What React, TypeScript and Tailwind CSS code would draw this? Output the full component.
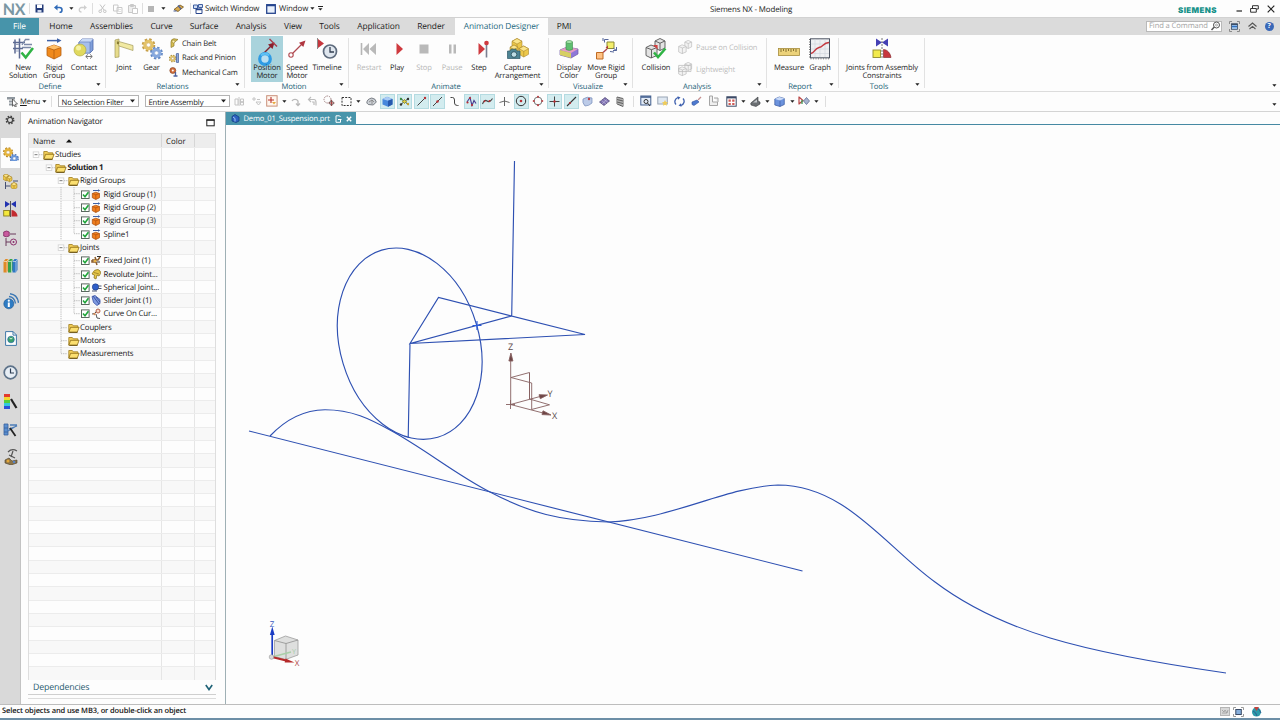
import type { ReactNode } from "react";

type Kids = { children?: ReactNode };

/* ---------- primitives ---------- */

function Svg({ w, h = w, vw = w, vh = h, children }: Kids & { w: number; h?: number; vw?: number; vh?: number }) {
  return (
    <svg width={w} height={h} viewBox={`0 0 ${vw} ${vh}`} fill="none" className="block shrink-0">
      {children}
    </svg>
  );
}

function Cell({ c, children }: Kids & { c: string }) {
  return <div className={`flex h-full shrink-0 items-center justify-center ${c}`}>{children}</div>;
}

function Caret() {
  return (
    <Svg w={5} h={3}>
      <path d="M0.3 0.3h4.2L2.4 2.7z" fill="#222" />
    </Svg>
  );
}

const Sep = () => <div className="h-[11px] w-px bg-[#dedede]" />;

/* ---------- ribbon icons (22 x 22) ---------- */

const NewSolutionIcon = () => (
  <Svg w={22}>
    <path d="M3 1.500v14M7.500 .5v20M1 4.500h12M1 10.500h10" stroke="#5c6a92" strokeWidth="1.500" />
    <path d="M17.500 1.500h-4L10 7M10 9.500h9M12 6.500h8" stroke="#7b89a8" strokeWidth="1.300" />
    <path d="M4 6.500h3M4 13h3" stroke="#9aa5c0" strokeWidth="1.200" />
    <path d="M9.500 14.500l4.200 5L21 10" stroke="#2fb344" strokeWidth="2.600" />
  </Svg>
);
const RigidGroupIcon = () => (
  <Svg w={22}>
    <path d="M4 2.600h11" stroke="#3e62a8" strokeWidth="1.500" />
    <path d="M14 .2l4.500 2.400-4.500 2.400z" fill="#3e62a8" />
    <path d="M4 9.500L11 7l7 2.500v8L11 21l-7-3.500z" fill="#f08a1c" stroke="#b45d10" strokeWidth=".8" />
    <path d="M4 9.500L11 7l7 2.500-7 2.500z" fill="#ffc069" />
    <path d="M11 12v9M4 9.500l7 2.500 7-2.500" stroke="#b45d10" strokeWidth=".8" />
  </Svg>
);
const ContactIcon = () => (
  <Svg w={22}>
    <path d="M6 4l3-3h11v11l-3 3H6z" fill="#7f9fda" stroke="#4b66a8" strokeWidth=".8" />
    <path d="M6 4l3-3h11l-3 3z" fill="#c8d9f6" />
    <path d="M6 4h11v11H6z" fill="#a6bfec" stroke="#5b77b6" strokeWidth=".6" />
    <circle cx="7" cy="12" r="6" fill="#e0d95e" stroke="#aaa23b" strokeWidth=".6" />
    <circle cx="5.500" cy="10" r="2.500" fill="#f6f2a6" />
    <path d="M13 18.500h6m-4-2.200l-2.300 2.200 2.300 2.200m2-4.400l2.300 2.200-2.300 2.200" stroke="#6a6a6a" strokeWidth=".9" />
  </Svg>
);
const JointIcon = () => (
  <Svg w={22}>
    <path d="M2 2l4-1v18l-4 .5z" fill="#e7dc8c" stroke="#a29a5a" strokeWidth=".7" />
    <path d="M4 3l16 4.500v5L6 8z" fill="#f1e9a2" stroke="#a29a5a" strokeWidth=".7" />
    <circle cx="5" cy="5" r="1.300" fill="#887c34" />
  </Svg>
);
function GearShape({ x, y, r, f, s }: { x: number; y: number; r: number; f: string; s: string }) {
  return (
    <g>
      <circle cx={x} cy={y} r={r} stroke={s} strokeWidth={r * 0.42} strokeDasharray={`${r * 0.44} ${r * 0.345}`} />
      <circle cx={x} cy={y} r={r * 0.66} stroke={f} strokeWidth={r * 0.55} />
      <circle cx={x} cy={y} r={r * 0.36} stroke={s} strokeWidth=".5" fill="#fff" />
    </g>
  );
}
const GearIcon = () => (
  <Svg w={22}>
    <GearShape x={7.5} y={7} r={5.6} f="#e3c268" s="#c69f48" />
    <GearShape x={15.5} y={15} r={5.3} f="#87a9de" s="#6288c4" />
  </Svg>
);
const PositionMotorIcon = () => (
  <Svg w={24} h={28}>
    <path d="M5 19L18 6" stroke="#7c2430" strokeWidth="1.500" />
    <path d="M19.500 4.500l-6.500 2 4.500 4.500z" fill="#8c1f2c" />
    <path d="M14.500 1l7.500 7.500" stroke="#a83c48" strokeWidth="1.400" />
    <circle cx="10" cy="21" r="5.300" stroke="#2f9be4" strokeWidth="3.200" fill="#b9dff2" />
    <path d="M6 17.500a5.300 5.300 0 0 1 8 0" stroke="#5ec0f4" strokeWidth="2.200" />
  </Svg>
);
const SpeedMotorIcon = () => (
  <Svg w={22}>
    <circle cx="5" cy="17" r="2.200" stroke="#b0484f" strokeWidth="1.100" />
    <path d="M6.500 15.500L17 5" stroke="#b0484f" strokeWidth="1.200" />
    <path d="M19.500 2.500l-6.500 2.200 4.300 4.300z" fill="#b0363f" />
  </Svg>
);
const TimelineIcon = () => (
  <Svg w={22}>
    <path d="M1.500 0v11" stroke="#8a8a8a" />
    <path d="M2 1l6 4.500L2 10z" fill="#c6373e" />
    <circle cx="14" cy="13.500" r="6.500" fill="#dfe6ee" stroke="#5e6b7d" strokeWidth="1.700" />
    <path d="M14 9v5h4" stroke="#333f52" strokeWidth="1.300" />
  </Svg>
);
const RestartIcon = () => (
  <Svg w={22}>
    <path d="M3.500 5v12" stroke="#b5b5b5" strokeWidth="1.600" />
    <path d="M11 5v12L5 11zM18 5v12l-6.500-6z" fill="#b9b9b9" />
  </Svg>
);
const PlayIcon = () => (
  <Svg w={22}>
    <path d="M10.500 5l6.500 6-6.500 6z" fill="#cf3a3f" />
  </Svg>
);
const StopIcon = () => (
  <Svg w={22}>
    <rect x="6.500" y="6.500" width="9" height="9" fill="#b9b9b9" />
  </Svg>
);
const PauseIcon = () => (
  <Svg w={22}>
    <path d="M8 6.500h2.500v9H8zM12.500 6.500H15v9h-2.500z" fill="#b9b9b9" />
  </Svg>
);
const StepIcon = () => (
  <Svg w={22}>
    <path d="M10.500 5l6.500 6-6.500 6z" fill="#cf3a3f" />
    <path d="M18.500 5v14.500" stroke="#7a7f92" strokeWidth="1.600" />
    <circle cx="18.500" cy="5" r="2.300" fill="#cf3a3f" />
  </Svg>
);
function MiniCube({ x, y, s, t = "#fbe58b", f = "#edc84a", k = "#a9872c" }: { x: number; y: number; s: number; t?: string; f?: string; k?: string }) {
  const q = s * 0.28;
  return (
    <g stroke={k} strokeWidth=".6">
      <path d={`M${x} ${y + q}l${s / 2} ${-q}l${s / 2} ${q}v${s * 0.6}l${-s / 2} ${q}l${-s / 2} ${-q}z`} fill={f} />
      <path d={`M${x} ${y + q}l${s / 2} ${-q}l${s / 2} ${q}l${-s / 2} ${q}z`} fill={t} />
      <path d={`M${x + s / 2} ${y + 2 * q}v${s * 0.6}`} />
    </g>
  );
}
const CaptureIcon = () => (
  <Svg w={22}>
    <MiniCube x={5} y={0.5} s={10} />
    <MiniCube x={12} y={8} s={9.5} />
    <MiniCube x={3} y={7} s={8} />
    <path d="M.5 13h2.500l1-1.800h5l1 1.800h3v7.500H.5z" fill="#4d8494" stroke="#2e5866" strokeWidth=".7" />
    <circle cx="7" cy="16.500" r="2.800" fill="#bfdde4" stroke="#234a56" strokeWidth=".8" />
  </Svg>
);
const DisplayColorIcon = () => (
  <Svg w={22}>
    <path d="M2 12l7-3 11 2v5l-7 4-11-3z" fill="#8e78d8" stroke="#6d5aa5" strokeWidth=".7" />
    <path d="M2 12l7-3 11 2-7 4z" fill="#e69cc4" />
    <path d="M2 12l11 3v5L2 17z" fill="#d6cf62" />
    <path d="M8 4v7.500q3 1.800 6.500 0V4z" fill="#5fbf70" stroke="#3c8c4c" strokeWidth=".6" />
    <ellipse cx="11.200" cy="4" rx="3.200" ry="1.500" fill="#a8e6ac" stroke="#3c8c4c" strokeWidth=".6" />
  </Svg>
);
const MoveRigidIcon = () => (
  <Svg w={22}>
    <path d="M1.500 14.500H8V21H1.500z" fill="#ffc183" stroke="#bf6b22" strokeWidth="1" />
    <path d="M12 4h7v6.500h-7z" fill="#f3ee6c" stroke="#8d8a34" strokeWidth="1" />
    <path d="M8 14.500l4-3.500" stroke="#b0484f" strokeWidth="1.400" />
    <path d="M13 10.500v-3l-2.500 2.500z" fill="#b0363f" />
    <path d="M9.500 4.500V1.500h4M8 3V0M18 12.500h3.500V9M21.500 12.500L18 10M15 13.500l4 .5" stroke="#55669a" />
  </Svg>
);
function WireCubes({ c, f }: { c: string; f: string }) {
  return (
    <g stroke={c} strokeWidth=".9" fill={f}>
      <path d="M10 3l5-2.500L20 3v7l-5 2.500L10 10z" />
      <path d="M10 3l5 2.200L20 3M15 5.200v7.300" />
      <path d="M1 9.500l5-2.500 6 2.500v8L6 20l-5-2.500z" />
      <path d="M1 9.500l5.500 2.200L12 9.500M6.500 11.700V20" />
    </g>
  );
}
const CollisionIcon = () => (
  <Svg w={22}>
    <WireCubes c="#555" f="#e3e3e3" />
    <path d="M9.500 7.500l2.500 2.500v-2.500z" stroke="#d24040" strokeWidth="1.200" />
    <path d="M9 14.500l4 4.500 7.500-8.500" stroke="#2fb344" strokeWidth="2.500" />
  </Svg>
);
const MeasureIcon = () => (
  <Svg w={22}>
    <rect x=".5" y="10.500" width="21" height="7" fill="#ecd27a" stroke="#a68c3d" strokeWidth=".8" />
    <path d="M3 11v3M5.500 11v2M8 11v3M10.500 11v2M13 11v3M15.500 11v2M18 11v3" stroke="#6f5c22" strokeWidth=".8" />
  </Svg>
);
const GraphIcon = () => (
  <Svg w={22}>
    <rect x="1.500" y=".8" width="19" height="19" fill="#eef0f3" stroke="#4b5361" strokeWidth="1" />
    <path d="M6 1v18M11 1v18M16 1v18M2 6h18M2 11h18M2 15.500h18" stroke="#cfd4db" strokeWidth=".6" />
    <path d="M2 15.500c4-1 3.500-5 8-6s4-4.500 10-5" stroke="#c4383f" strokeWidth="1.500" />
    <path d="M1.500 20.800h19M.5 1v19" stroke="#777" strokeDasharray="1 1.500" />
  </Svg>
);
const JointsAsmIcon = () => (
  <Svg w={22}>
    <path d="M5 .5l6 4-6 4zM17 .5l-6 4 6 4z" fill="#4440b4" />
    <path d="M11 0v21" stroke="#666" strokeWidth=".9" strokeDasharray="2 1" />
    <rect x="2" y="12" width="7.500" height="7.500" fill="#f2ea4c" stroke="#8f8a2d" strokeWidth=".9" />
    <path d="M12.500 11.500c4 0 7 4 7.500 8h-7.500z" fill="#c8363c" stroke="#7d2227" strokeWidth=".6" />
  </Svg>
);

/* ---------- ribbon structure ---------- */

function Big({ c, icon, lines, off, on }: { c: string; icon: ReactNode; lines: string[]; off?: boolean; on?: boolean }) {
  return (
    <div
      className={`flex h-[46px] shrink-0 flex-col items-center text-[7.600px] leading-[8.500px] tracking-[-.120px] ${c} ${off ? "text-[#b8b8b8]" : "text-[#1f1f1f]"} ${on ? "bg-[#a9d3dc]" : ""}`}
    >
      <div className="flex h-[27.500px] items-start overflow-visible pt-[2px]">{icon}</div>
      {lines.map((l) => (
        <span key={l} className="relative z-10 whitespace-nowrap">
          {l}
        </span>
      ))}
    </div>
  );
}

function Group({ c, label, pad, children }: Kids & { c: string; label: string; pad: string }) {
  return (
    <div className={`flex shrink-0 ${c}`}>
      <div className="flex min-w-0 flex-1 flex-col">
        <div className={`flex h-[47.500px] items-start pt-[1.500px] ${pad}`}>{children}</div>
        <div className="flex h-[8px] items-center pr-[4px]">
          <span className="flex-1 pl-[4px] pt-[2.500px] text-center text-[7.700px] leading-[8px] tracking-[-.100px] text-[#1f6379]">{label}</span>
          <div className="pb-[3px]">
            <Caret />
          </div>
        </div>
      </div>
      <div className="mt-[3px] h-[50px] w-px bg-[#e2e2e2]" />
    </div>
  );
}

function Small({ icon, text, off }: { icon: ReactNode; text: string; off?: boolean }) {
  return (
    <div className={`flex h-[14.600px] items-center gap-[3px] whitespace-nowrap text-[7.600px] leading-[10px] tracking-[-.170px] ${off ? "text-[#bdbdbd]" : "text-[#1f1f1f]"}`}>
      {icon}
      <span className="pt-px">{text}</span>
    </div>
  );
}

const BeltIcon = () => (
  <Svg w={10}>
    <path d="M2 9.500V4q0-3 3-3.300L9 1.500 5 4.500V8z" fill="#d8bf52" stroke="#8d7a2b" strokeWidth=".7" />
    <circle cx="4.500" cy="3.600" r="1.400" fill="#fff3b2" stroke="#8d7a2b" strokeWidth=".5" />
  </Svg>
);
const RackIcon = () => (
  <Svg w={10}>
    <GearShape x={3.7} y={5.5} r={3.2} f="#dfc168" s="#a98b35" />
    <path d="M7.500 .5h2v9h-2zM6.600 2h1M6.600 4h1M6.600 6h1M6.600 8h1" stroke="#536ca5" strokeWidth=".8" fill="#90a8d8" />
  </Svg>
);
const CamIcon = () => (
  <Svg w={10}>
    <circle cx="3.800" cy="3.500" r="3" fill="#d06b3a" stroke="#80401f" strokeWidth=".6" />
    <circle cx="3.800" cy="3.500" r="1" fill="#fff" />
    <path d="M6.500 5v4.500M4.500 9h4" stroke="#4c62a0" strokeWidth="1.300" />
  </Svg>
);

/* ---------- top bars ---------- */

function TitleBar() {
  return (
    <div className="flex h-[17px] shrink-0 items-center text-[7.900px] leading-[10px] tracking-[-.110px] text-[#1c1c1c]">
      <Cell c="w-[27px] pt-px">
        <span className="pl-px font-[Lato] text-[16px] font-bold leading-[17px] tracking-[-.300px] text-[#7a97a3]">NX</span>
      </Cell>
      <Cell c="w-[4px]"><Sep /></Cell>
      <Cell c="w-[17px]">
        <Svg w={9}>
          <path d="M.5 .5h8v8h-8z" fill="#233a78" />
          <path d="M2 .5h5v3.500H2z" fill="#fff" />
          <path d="M2.500 6h4v2.500h-4z" fill="#cfd8ec" />
        </Svg>
      </Cell>
      <Cell c="w-[20px]">
        <Svg w={9}>
          <path d="M2 3.500h3.500a2.200 2.200 0 0 1 0 5" stroke="#2f6ab8" strokeWidth="1.600" />
          <path d="M0 3.500L3.500 .5v6z" fill="#2f6ab8" />
        </Svg>
      </Cell>
      <Cell c="w-[6px]"><Caret /></Cell>
      <Cell c="w-[16px]">
        <Svg w={9}>
          <path d="M7 3.500H3.500a2.200 2.200 0 0 0 0 4.500" stroke="#cfcfcf" strokeWidth="1.300" />
          <path d="M9 3.500L6 1v5z" fill="#cfcfcf" />
        </Svg>
      </Cell>
      <Cell c="w-[5px]"><Sep /></Cell>
      <Cell c="w-[15px]">
        <Svg w={9}>
          <path d="M2 .5l4 5.500M7 .5L3 6" stroke="#c4c4c4" />
          <circle cx="2.200" cy="7.300" r="1.300" stroke="#c4c4c4" /><circle cx="6.800" cy="7.300" r="1.300" stroke="#c4c4c4" />
        </Svg>
      </Cell>
      <Cell c="w-[15px]">
        <Svg w={10}>
          <path d="M.5 1h4.500v6H.5zM4 3.500h5v6H4z" stroke="#c9c9c9" fill="#fff" />
          <path d="M5 5.500h3M5 7.500h3" stroke="#d5d5d5" strokeWidth=".7" />
        </Svg>
      </Cell>
      <Cell c="w-[15px]">
        <Svg w={10}>
          <path d="M.5 1.500h7v7h-7zM2.500 .5h3v2h-3z" stroke="#c9c9c9" fill="#eee" />
          <path d="M4.500 4.500h5v5h-5z" stroke="#c9c9c9" fill="#fff" />
        </Svg>
      </Cell>
      <Cell c="w-[5px]"><Sep /></Cell>
      <Cell c="w-[12px]"><div className="size-[6px] bg-[#b5b5b5]" /></Cell>
      <Cell c="w-[12px]"><Caret /></Cell>
      <Cell c="w-[19px]">
        <Svg w={11} h={9}>
          <path d="M1 5.500L7 1l3.500 2L5 7.500z" fill="#d9ab4f" stroke="#6e521d" strokeWidth=".8" />
          <path d="M.5 7h3M5 1.500L8 5" stroke="#4a5f9a" strokeWidth="1.200" />
        </Svg>
      </Cell>
      <Cell c="w-[4px]"><Sep /></Cell>
      <Cell c="w-[12px]">
        <Svg w={10}>
          <path d="M.5 1h4v3.500h-4zM5.500 .5h4v3h-4z" stroke="#3f5fa0" fill="#cfdcf3" />
          <path d="M3 5h6v4.500H3z" stroke="#28468c" fill="#fff" />
          <path d="M3 5.500h6" stroke="#28468c" strokeWidth="1.500" />
        </Svg>
      </Cell>
      <span className="w-[61px] whitespace-nowrap pl-px pt-[1.500px]">Switch Window</span>
      <Cell c="w-[11px]">
        <Svg w={10}>
          <rect x=".7" y=".7" width="8.600" height="8.600" stroke="#26458e" strokeWidth="1.300" fill="#e9f0fb" />
          <path d="M1 1.500h8" stroke="#26458e" strokeWidth="1.500" />
        </Svg>
      </Cell>
      <span className="w-[33px] pl-[3px] pt-[1.500px]">Window</span>
      <Cell c="w-[7px]"><Caret /></Cell>
      <Cell c="w-[8px]">
        <Svg w={5} h={5}><path d="M0 .5h5" stroke="#222" /><path d="M.3 2.200h4.200L2.400 4.600z" fill="#222" /></Svg>
      </Cell>
      <span className="ml-[386px] w-[90px] whitespace-nowrap pt-[2.500px]">Siemens NX - Modeling</span>
      <div className="flex-1" />
      <span className="mr-[17px] mt-[2px] font-[Inter] text-[7.900px] font-black tracking-[.420px] text-[#159189]">SIEMENS</span>
      <Cell c="w-[10px]"><Svg w={7}><path d="M.5 6h5.500" stroke="#333" strokeWidth="1.300" /></Svg></Cell>
      <Cell c="w-[20px]">
        <Svg w={9} h={8}><path d="M2.500 3V.7h5.800V4H6.500M.6 3.500h5.700v3.700H.6z" stroke="#333" /></Svg>
      </Cell>
      <Cell c="w-[13px]"><Svg w={8}><path d="M.7 .7l6.600 6.600M7.300 .7L.7 7.300" stroke="#222" strokeWidth="1.200" /></Svg></Cell>
      <div className="w-[3px]" />
    </div>
  );
}

const tabs: [string, string][] = [
  ["Home", "w-[44px]"],
  ["Assemblies", "w-[57px]"],
  ["Curve", "w-[43px]"],
  ["Surface", "w-[42px]"],
  ["Analysis", "w-[52px]"],
  ["View", "w-[32px]"],
  ["Tools", "w-[41px]"],
  ["Application", "w-[57px]"],
  ["Render", "w-[48px]"],
];

function TabBar() {
  return (
    <div className="flex h-[17.500px] shrink-0 items-center border-t border-[#d2d2d2] bg-[#dbdbdb] text-[8.400px] tracking-[-.100px] text-[#222]">
      <Cell c="w-[39px] bg-[#4794aa] text-white pt-[2px]">File</Cell>
      {tabs.map(([t, c]) => (
        <Cell key={t} c={`pt-[2px] ${c}`}>{t}</Cell>
      ))}
      <Cell c="w-[93px] bg-[#fdfdfd] text-[#1f6a80] whitespace-nowrap pt-[2px]">Animation Designer</Cell>
      <Cell c="w-[32px] pt-[2px]">PMI</Cell>
      <div className="flex-1" />
      <div className="flex h-[11.500px] w-[76px] items-center justify-between border border-[#b9b9b9] bg-white pl-[2px] text-[7.600px] text-[#a3a3a3]">
        <span className="whitespace-nowrap pt-[1.500px]">Find a Command</span>
        <Svg w={11} h={10}>
          <circle cx="6.500" cy="4" r="3" stroke="#555" /><circle cx="6.500" cy="4" r="1" stroke="#777" strokeWidth=".6" />
          <path d="M4.300 6L1.500 9" stroke="#555" strokeWidth="1.500" />
        </Svg>
      </div>
      <Cell c="w-[24px]">
        <Svg w={11}>
          <path d="M.5 3V.5H3M8 .5h2.500V3M10.500 8v2.500H8M3 10.500H.5V8" stroke="#8b8b8b" />
          <rect x="2.500" y="2.800" width="6" height="5.500" fill="#a9cbee" stroke="#3a4a63" strokeWidth=".8" />
          <path d="M2.500 3.300h6" stroke="#26364e" /><path d="M3 5.500h5" stroke="#2f6fc0" strokeWidth="1.500" />
        </Svg>
      </Cell>
      <Cell c="w-[12px]">
        <Svg w={9} h={8}><path d="M.5 4.500l4-3.500 4 3.500M1.500 7l3-2.600L7.500 7" stroke="#555" strokeWidth="1.100" /></Svg>
      </Cell>
      <Cell c="w-[22px]">
        <div className="flex size-[9px] items-center justify-center rounded-full bg-[#3a68b8] text-[7px] font-bold leading-none text-white">?</div>
      </Cell>
    </div>
  );
}

function Ribbon() {
  return (
    <div className="flex h-[57px] shrink-0 border-b border-[#dcdcdc]">
      <Group c="w-[106px]" label="Define" pad="pl-[7px]">
        <Big c="w-[32px]" icon={<NewSolutionIcon />} lines={["New", "Solution"]} />
        <Big c="w-[30px]" icon={<RigidGroupIcon />} lines={["Rigid", "Group"]} />
        <Big c="w-[30px]" icon={<ContactIcon />} lines={["Contact"]} />
      </Group>
      <Group c="w-[139px]" label="Relations" pad="pl-[4px]">
        <Big c="w-[28px]" icon={<JointIcon />} lines={["Joint"]} />
        <Big c="w-[27px]" icon={<GearIcon />} lines={["Gear"]} />
        <div className="flex flex-col pl-[4px]">
          <Small icon={<BeltIcon />} text="Chain Belt" />
          <Small icon={<RackIcon />} text="Rack and Pinion" />
          <Small icon={<CamIcon />} text="Mechanical Cam" />
        </div>
      </Group>
      <Group c="w-[104px]" label="Motion" pad="pl-[6px]">
        <Big c="w-[32px]" icon={<PositionMotorIcon />} lines={["Position", "Motor"]} on />
        <Big c="w-[28px]" icon={<SpeedMotorIcon />} lines={["Speed", "Motor"]} />
        <Big c="w-[32px]" icon={<TimelineIcon />} lines={["Timeline"]} />
      </Group>
      <Group c="w-[200px]" label="Animate" pad="pl-[6px]">
        <Big c="w-[28px]" icon={<RestartIcon />} lines={["Restart"]} off />
        <Big c="w-[28px]" icon={<PlayIcon />} lines={["Play"]} />
        <Big c="w-[26px]" icon={<StopIcon />} lines={["Stop"]} off />
        <Big c="w-[30px]" icon={<PauseIcon />} lines={["Pause"]} off />
        <Big c="w-[24px]" icon={<StepIcon />} lines={["Step"]} />
        <Big c="w-[53px]" icon={<CaptureIcon />} lines={["Capture", "Arrangement"]} />
      </Group>
      <Group c="w-[84px]" label="Visualize" pad="pl-[5px]">
        <Big c="w-[30px]" icon={<DisplayColorIcon />} lines={["Display", "Color"]} />
        <Big c="w-[44px]" icon={<MoveRigidIcon />} lines={["Move Rigid", "Group"]} />
      </Group>
      <Group c="w-[134px]" label="Analysis" pad="pl-[6px]">
        <Big c="w-[34px]" icon={<CollisionIcon />} lines={["Collision"]} />
        <div className="flex flex-col gap-[8px] pl-[5px] pt-[4px]">
          <Small off icon={<Svg w={15} h={15} vw={22} vh={22}><WireCubes c="#b5b5b5" f="#f3f3f3" /></Svg>} text="Pause on Collision" />
          <Small
            off
            icon={<Svg w={15} h={15} vw={22} vh={22}><WireCubes c="#b5b5b5" f="#f3f3f3" /><path d="M1 5h18v9H1z" stroke="#b5b5b5" /></Svg>}
            text="Lightweight"
          />
        </div>
      </Group>
      <Group c="w-[72px]" label="Report" pad="pl-[6px]">
        <Big c="w-[32px]" icon={<MeasureIcon />} lines={["Measure"]} />
        <Big c="w-[30px]" icon={<GraphIcon />} lines={["Graph"]} />
      </Group>
      <Group c="w-[86px]" label="Tools" pad="pl-[5px]">
        <Big c="w-[76px]" icon={<JointsAsmIcon />} lines={["Joints from Assembly", "Constraints"]} />
      </Group>
      <div className="flex-1" />
      <div className="flex items-end pb-[4px] pr-[3px]"><Caret /></div>
    </div>
  );
}

function Tog({ on, children }: Kids & { on?: boolean }) {
  return (
    <div className="flex h-full w-[16.650px] shrink-0 items-center justify-center">
      <div className={`flex h-[15px] w-[15px] items-center justify-center ${on ? "border border-[#b4dbe1] bg-[#d3ecef]" : ""}`}>{children}</div>
    </div>
  );
}

function Combo({ c, text }: { c: string; text: string }) {
  return (
    <div className={`flex h-[11.500px] shrink-0 items-center justify-between whitespace-nowrap border border-[#b4b4b4] bg-white pl-[2.500px] pr-[3px] ${c}`}>
      <span className="pt-[3px]">{text}</span>
      <Svg w={5} h={4}><path d="M0 .5h5L2.500 3.500z" fill="#222" /></Svg>
    </div>
  );
}

function SelectionBar() {
  return (
    <div className="flex h-[19px] shrink-0 items-center text-[7.700px] leading-[10px] tracking-[-.160px] text-[#1c1c1c]">
      <Cell c="w-[20px] pl-[4px]">
        <Svg w={11}>
          <path d="M0 1h8v2.500H0zM2 4.500h6v2H2zM2 7.500h4v2H2z" fill="#8f979e" />
          <path d="M5.500 3l5 5-2.200.2 1 2.300-1.200.5-1-2.300-1.600 1.500z" fill="#fff" stroke="#333" strokeWidth=".7" />
        </Svg>
      </Cell>
      <span className="w-[21px] pt-[2px]"><u>M</u>enu</span>
      <Cell c="w-[6px]"><Caret /></Cell>
      <Cell c="w-[8px]"><Sep /></Cell>
      <div className="w-[3px]" />
      <Combo c="w-[81px]" text="No Selection Filter" />
      <div className="w-[6px]" />
      <Combo c="w-[85px]" text="Entire Assembly" />
      <Cell c="w-[18px]">
        <Svg w={11}><path d="M1 3h3v6H1zM5 1v9M6.500 3h3v6h-3z" stroke="#c4c4c4" /><circle cx="8" cy="6" r="1" fill="#bbb" /></Svg>
      </Cell>
      <Cell c="w-[16px]">
        <Svg w={11}><path d="M1 3h4M3 1v4M5 6h5L7.500 9zM6 3.500h3" stroke="#c4c4c4" /></Svg>
      </Cell>
      <Cell c="w-[16px]">
        <Svg w={12}>
          <rect x=".7" y=".7" width="10.400" height="10.400" stroke="#c99079" strokeWidth="1" fill="#fff6ee" />
          <path d="M5 2v6M2 5h6" stroke="#b9332e" strokeWidth="1.100" /><path d="M6 7h4L8 9.500z" fill="#e8a93f" />
        </Svg>
      </Cell>
      <Cell c="w-[8px]"><Caret /></Cell>
      <Cell c="w-[17px]">
        <Svg w={11}><path d="M1 5a3.500 3.500 0 0 1 6 0v4M5 7.500l2 2 2-2" stroke="#b8b8b8" strokeWidth="1.300" /></Svg>
      </Cell>
      <Cell c="w-[15px]">
        <Svg w={11}><path d="M1 3.500h6q2 0 2 3v3M4 1L1.500 3.500 4 6M5 6h2v3" stroke="#bdbdbd" strokeWidth="1.200" /></Svg>
      </Cell>
      <Cell c="w-[18px]">
        <Svg w={12}>
          <circle cx="4.500" cy="4.500" r="3.500" stroke="#9a7a7a" strokeDasharray="1.500 1" />
          <path d="M8.500 5v6M5.500 8h6" stroke="#a94545" strokeWidth="1.200" /><circle cx="8.500" cy="8" r="2" stroke="#555" strokeWidth=".7" />
        </Svg>
      </Cell>
      <Cell c="w-[16px]">
        <Svg w={11}><rect x="1" y="1.500" width="9" height="8" stroke="#333" strokeDasharray="2 1.200" /></Svg>
      </Cell>
      <Cell c="w-[9px]"><Caret /></Cell>
      <Tog><Svg w={11}><path d="M.8 7q0-4 5-5 4 .5 4.500 4l-3 3-5-.5z" fill="#ccd0d5" stroke="#60656d" strokeWidth=".8" /><path d="M3 6l3-2 2 2M6 4v4" stroke="#777" strokeWidth=".7" /></Svg></Tog>
      <Tog on>
        <Svg w={11}><path d="M.5 3L5 .7 10.500 3v5.500L6 10.800.5 8.500z" fill="#4788dc" /><path d="M.5 3L5 .7 10.500 3 6 4.700z" fill="#a9cbf5" /><path d="M6 4.700v6L10.500 8.500V3z" fill="#2659ae" /></Svg>
      </Tog>
      <Tog on>
        <Svg w={11}><path d="M1 2l9 7M1 9l9-7" stroke="#384832" strokeWidth="1" /><path d="M5.500 3v5M3 5.500h5" stroke="#a8b03c" /><circle cx="2" cy="3" r="1.200" fill="#3c8f46" /><circle cx="9" cy="8" r="1.200" fill="#c9a02a" /><circle cx="5.500" cy="5.500" r="1.300" fill="#e2cc46" /><circle cx="2" cy="8.500" r="1.200" fill="#333" /><circle cx="9" cy="3" r="1.200" fill="#333" /></Svg>
      </Tog>
      <Tog on><Svg w={11}><path d="M1.500 9.500l7-7" stroke="#444" /><circle cx="9" cy="2" r="1.200" fill="#b92f35" /></Svg></Tog>
      <Tog on><Svg w={11}><path d="M1 10l9-9" stroke="#444" /><circle cx="5.500" cy="5.500" r="1.200" fill="#b92f35" /></Svg></Tog>
      <Tog><Svg w={11}><path d="M1.500 1.500h2q2 0 2 2.500v3q0 2.500 3 2.500h1" stroke="#444" /></Svg></Tog>
      <Tog on><Svg w={11}><path d="M1 6L4 1.500 6 9.500l2-5 2 3" stroke="#473a8f" strokeWidth="1.100" /><circle cx="4" cy="2" r="1.100" fill="#b92f35" /><circle cx="6" cy="9" r="1.100" fill="#b92f35" /><circle cx="1.500" cy="6.500" r="1.100" fill="#b92f35" /></Svg></Tog>
      <Tog on><Svg w={11}><path d="M.5 8q2-5 4.500-3t5.500-2.500" stroke="#444" strokeWidth="1.100" /><circle cx="2.500" cy="5.300" r="1" fill="#b92f35" /><circle cx="7.500" cy="5" r="1" fill="#b92f35" /></Svg></Tog>
      <Tog><Svg w={11}><path d="M5.500 1v9M.5 6.500q5-3 10 0" stroke="#666" /></Svg></Tog>
      <Tog on><Svg w={12}><circle cx="6" cy="6" r="4.700" stroke="#333" /><circle cx="6" cy="6" r="1.300" fill="#b92f35" /></Svg></Tog>
      <Tog><Svg w={12}><circle cx="6" cy="6" r="3.900" stroke="#555" strokeWidth=".8" /><g fill="#b9464a"><circle cx="6" cy="1.800" r="1.100" /><circle cx="6" cy="10.200" r="1.100" /><circle cx="1.800" cy="6" r="1.100" /><circle cx="10.200" cy="6" r="1.100" /></g></Svg></Tog>
      <Tog on><Svg w={11}><path d="M5.500 .5v10M.5 5.500h10" stroke="#444" /><circle cx="5.500" cy="5.500" r="1.200" fill="#b92f35" /></Svg></Tog>
      <Tog on><Svg w={11}><path d="M1 10l9-9" stroke="#333" strokeWidth="1.100" /><circle cx="4" cy="7" r="1.100" fill="#b92f35" /></Svg></Tog>
      <Tog><Svg w={11}><path d="M1 3q4-3 9-1v5q-3 3-7 3-3-3-2-7z" fill="#bccbe8" stroke="#7389b8" strokeWidth=".7" /><circle cx="7" cy="3" r="1.200" fill="#b9464a" /></Svg></Tog>
      <Tog><Svg w={11}><path d="M.5 6L6 1.500 10.500 5 5 9.500z" fill="#7d6fb0" stroke="#47406e" strokeWidth=".7" /><path d="M2.500 4.500L7 8M4.500 3l4.500 3.500M3 8l5-4.500" stroke="#d8d2ee" strokeWidth=".5" /></Svg></Tog>
      <Tog><Svg w={11}><path d="M2 1l6 1.500v8L2 8zM4 1.500v7.500M6 2v8M2 3.500l6 1.500M2 6l6 1.500" stroke="#555" strokeWidth=".9" /></Svg></Tog>
      <Cell c="w-[9px]"><Sep /></Cell>
      <Cell c="w-[16px]"><Svg w={12}><rect x=".8" y="1" width="10" height="9" stroke="#44618f" fill="#e3ecf8" /><path d="M1 2h10" stroke="#44618f" strokeWidth="1.600" /><circle cx="6" cy="6.500" r="2" stroke="#333" /><path d="M7.500 8l2.500 3" stroke="#333" /></Svg></Cell>
      <Cell c="w-[17px]"><Svg w={12}><rect x=".8" y="2" width="9.500" height="7" stroke="#9aa6b5" fill="#dfe8f2" /><path d="M8 5l1 2 2 .3-1.500 1.500.4 2L8 9.800l-2 1 .4-2L5 7.300 7 7z" fill="#f0cc58" /></Svg></Cell>
      <Cell c="w-[17px]"><Svg w={11}><path d="M2 8.500a4.300 4.300 0 0 1 2-7M9 2.500a4.300 4.300 0 0 1-2 7" stroke="#3d5fae" strokeWidth="1.300" /><path d="M3.500 .3l3 1.200L4 3.700zM7.500 10.700l-3-1.200L7 7.300z" fill="#3d5fae" /></Svg></Cell>
      <Cell c="w-[17px]"><Svg w={11}><path d="M1 6l5-2 2 2-5 3.500-2-1z" fill="#4d79cf" stroke="#31529c" strokeWidth=".6" /><path d="M7 4l3-3" stroke="#c58f8f" strokeWidth="1.200" /></Svg></Cell>
      <Cell c="w-[17px]"><Svg w={12}><path d="M1.500 1h3v6h5v3.500h-8z M6 3h4v4" stroke="#a5a5a5" fill="#efefef" /></Svg></Cell>
      <Cell c="w-[18px]"><Svg w={11}><rect x=".8" y=".8" width="9.400" height="9.400" stroke="#3c4a66" fill="#fff" /><path d="M1 1.600h9" stroke="#3c4a66" strokeWidth="1.600" /><path d="M2.500 3.500h2.300v2.300H2.500zM6.200 3.500h2.300v2.300H6.200zM2.500 7h2.300v2H2.500zM6.200 7h2.300v2H6.200z" fill="#cf5a55" /></Svg></Cell>
      <Cell c="w-[6px]"><Caret /></Cell>
      <Cell c="w-[18px]"><Svg w={11}><path d="M.8 7L8 1v4l2 1v2L6 10.500 1 9z" fill="#6b6f73" stroke="#3b3e42" strokeWidth=".6" /><path d="M3 6.500l4-3v3z" fill="#c2c6ca" /></Svg></Cell>
      <Cell c="w-[6px]"><Caret /></Cell>
      <Cell c="w-[19px]"><Svg w={11}><path d="M.8 3l4.500-2 5 1.500v6L6 10.500.8 9z" fill="#6c93dd" stroke="#35569e" strokeWidth=".7" /><path d="M.8 3l4.500-2 5 1.500L6 4.500z" fill="#cadbf8" /><path d="M6 4.500v6" stroke="#35569e" strokeWidth=".6" /></Svg></Cell>
      <Cell c="w-[6px]"><Caret /></Cell>
      <Cell c="w-[18px]"><Svg w={12}><path d="M1 1.500v8M1 2l4 3.500L1 9" stroke="#b94646" strokeWidth="1.200" /><path d="M4 9V5" stroke="#3b9a55" strokeWidth="1.300" /><path d="M8.500 2.500L11.500 6l-3 3.500-3-3.500z" fill="#a7b4d0" stroke="#4e5f86" strokeWidth=".7" /></Svg></Cell>
      <Cell c="w-[6px]"><Caret /></Cell>
      <Cell c="w-[13px]"><Sep /></Cell>
      <div className="flex-1" />
      <div className="mt-[6px] pr-[3px]"><Caret /></div>
    </div>
  );
}

/* ---------- resource bar ---------- */

function SideBar() {
  return (
    <div className="flex w-[21px] shrink-0 flex-col border-r border-[#c3c3c3] bg-[#d9d9d9] pl-px">
      <div className="flex h-[26px] justify-center pr-[2px] pt-[3px]">
        <Svg w={10}>
          <circle cx="5" cy="5" r="3.600" stroke="#444" strokeWidth="1.700" strokeDasharray="1.500 1.330" />
          <circle cx="5" cy="5" r="2.600" stroke="#444" strokeWidth="1.200" />
        </Svg>
      </div>
      <div className="flex h-[30px] items-center justify-center bg-[#fdfdfd]">
        <Svg w={16} vw={22}>
          <GearShape x={7} y={7} r={5.8} f="#e5b43c" s="#b8892a" />
          <GearShape x={15.5} y={15.5} r={5.2} f="#6c98da" s="#3f68ae" />
        </Svg>
      </div>
      <div className="flex h-[27px] items-center justify-center">
        <Svg w={15}>
          <MiniCube x={0} y={0} s={6} /><MiniCube x={4} y={2} s={5} />
          <MiniCube x={8} y={8.5} s={6} /><path d="M2.500 8v7M2.500 12h5M10 7h5" stroke="#444f72" />
        </Svg>
      </div>
      <div className="flex h-[28px] items-center justify-center">
        <Svg w={15} h={16}>
          <path d="M2 0l5 3-5 3.500zM13 0L8 3l5 3.500z" fill="#2333b0" /><path d="M7.500 0v16" stroke="#333" strokeWidth=".8" />
          <rect x=".7" y="9.500" width="5.800" height="5.500" fill="#f4e83c" stroke="#8a7d1f" strokeWidth=".9" />
          <path d="M8.500 9c3 0 6 3 6 6.500h-6z" fill="#c22b30" />
        </Svg>
      </div>
      <div className="flex h-[29px] items-center justify-center">
        <Svg w={15} h={16}>
          <path d="M.7 2q3-2 5.500 0v4q-3 1.500-5.500 0z" fill="#c95a9e" stroke="#7c2b60" strokeWidth=".8" />
          <path d="M7 4h6M3 8v8M3 12h4" stroke="#6a3a5c" /><circle cx="10.500" cy="12" r="3" stroke="#8b2f6c" /><circle cx="10.500" cy="12" r="1" fill="#8b2f6c" />
        </Svg>
      </div>
      <div className="flex h-[27px] items-center justify-center">
        <Svg w={15} h={15}>
          <path d="M.5 3.500L2.500 1h3v11L4 14.500H.5z" fill="#e08a26" /><path d="M5 3.500L7 1h3v11l-1.500 2.500H5z" fill="#38a349" /><path d="M9.500 3.500l2-2.500h3v11L13 14.500H9.500z" fill="#2f78c4" />
          <path d="M4 3.500v11M8.500 3.500v11M13 3.500v11M.5 3.500H4L5.500 1M5 3.500h3.500L10 1M9.500 3.500H13L14.500 1" stroke="#f3f3f3" strokeWidth=".6" />
        </Svg>
      </div>
      <div className="flex h-[44px] items-center justify-center">
        <Svg w={16} h={17}>
          <circle cx="5.800" cy="10.800" r="5" fill="#2e7cc4" stroke="#1c548c" strokeWidth=".6" />
          <path d="M5.800 9.500v4.500" stroke="#fff" strokeWidth="2" /><circle cx="5.800" cy="7.700" r="1.100" fill="#fff" />
          <path d="M6 3.500q5.500.5 6.500 7M7 .8q7.500 1 8.500 9" stroke="#3c78b4" strokeWidth="1.400" />
        </Svg>
      </div>
      <div className="flex h-[30px] items-center justify-center">
        <Svg w={12} h={15}>
          <path d="M.6 .6h7.500l3.300 3.300v10.500H.6z" fill="#fdfdfd" stroke="#4078a8" />
          <path d="M8 .6v3.500h3.300" stroke="#4078a8" /><circle cx="6" cy="8.500" r="3.300" fill="#39a06a" stroke="#2d6fa4" strokeWidth=".7" />
          <path d="M4.500 7l1.500 1 1.500-1" stroke="#d7f2dd" />
        </Svg>
      </div>
      <div className="flex h-[38px] items-center justify-center">
        <Svg w={15}>
          <circle cx="7.500" cy="7.500" r="6.300" fill="#e7eef5" stroke="#5e738a" strokeWidth="1.700" />
          <path d="M7.500 3.500v4.500H11" stroke="#2c3c52" strokeWidth="1.200" />
        </Svg>
      </div>
      <div className="flex h-[21px] items-center justify-center">
        <Svg w={14} h={15}>
          <path d="M0 0h6v3H0z" fill="#e23b2e" /><path d="M0 3h6v3H0z" fill="#f3d832" /><path d="M0 6h6v3H0z" fill="#55cf3c" /><path d="M0 9h6v3H0z" fill="#33c9dc" /><path d="M0 12h6v3H0z" fill="#2b50d8" />
          <path d="M7 5l5.500 9" stroke="#222" strokeWidth="2.200" />
        </Svg>
      </div>
      <div className="flex h-[35px] items-center justify-center">
        <Svg w={15} h={14}>
          <path d="M1 1h4v11H1zM1 5h4M1 9h4" fill="#5a8fd0" stroke="#38619c" strokeWidth=".8" />
          <path d="M6 6l8-3M5 8l9-5.500M7 2h7" stroke="#4d7db8" strokeWidth="1.300" /><path d="M7 5l5.500 8" stroke="#222" strokeWidth="1.800" />
        </Svg>
      </div>
      <div className="flex h-[20px] items-center justify-center">
        <Svg w={14} h={16}>
          <path d="M4 3q4-4 9-1M9 2l-2 6M5 6l6 3" stroke="#555" strokeWidth="1.200" />
          <path d="M1 11l4-2 3 3 5-1v3l-6 2-6-2z" fill="#8c7448" stroke="#4a3d25" strokeWidth=".6" /><circle cx="4" cy="12" r="1.500" fill="#e3a73a" />
          <circle cx="10" cy="13" r="1.300" fill="#5582c4" />
        </Svg>
      </div>
    </div>
  );
}

/* ---------- navigator ---------- */

const FolderIcon = () => (
  <Svg w={12} h={13}>
    <path d="M.8 11V3.500h3.500l1 1.300h4.500V7" fill="#f3cf58" stroke="#9c7a1d" strokeWidth=".8" />
    <path d="M.8 11.300l1.800-5h8.500l-1.900 5z" fill="#fbdf70" stroke="#8a6a14" strokeWidth=".8" />
    <path d="M1.500 11.300h8" stroke="#5f480d" strokeWidth=".9" />
  </Svg>
);
const CheckIcon = () => (
  <Svg w={11} h={13}>
    <rect x="1.500" y="2.900" width="7.600" height="7.600" fill="#fff" stroke="#4a5a50" strokeWidth=".9" />
    <path d="M3 6.500l2 2.300 3.400-4.600" stroke="#1fa53a" strokeWidth="1.600" />
  </Svg>
);
const bodyIcons: Record<string, ReactNode> = {
  rigid: <><path d="M2 2.500h6" stroke="#3e62a8" strokeWidth="1" /><path d="M7 1.200l2.300 1.300L7 3.800z" fill="#3e62a8" /><path d="M1.300 5.500l3.500-1.300 3.700 1.300v4.200l-3.700 1.800-3.500-1.800z" fill="#ef7d1d" stroke="#a64a0c" strokeWidth=".7" /><path d="M1.300 5.500l3.500 1.300 3.700-1.300M4.800 6.800v4.700" stroke="#a64a0c" strokeWidth=".6" /></>,
  fixed: <><path d="M1 6h6l2-3M1 6v2h4l1 3M5 6L4 3" stroke="#8a5a28" strokeWidth="1.500" /><path d="M6 2.500h4M6 8h3" stroke="#333" /><circle cx="4" cy="7" r="1.300" fill="#e5b143" /></>,
  revolute: <><path d="M1 6q2-5 6-4.500 3 1 2.500 4L8 8 6 7l-1 4-2-1 .5-3z" fill="#e6c648" stroke="#8f7620" strokeWidth=".8" /><path d="M3 4.500l5 1.500" stroke="#8f7620" strokeWidth=".7" /></>,
  spherical: <><circle cx="4.500" cy="6" r="3.200" fill="#2f5fc8" stroke="#1b3b85" strokeWidth=".6" /><path d="M7 5h3.500M7 7.500h3.500M1 10h5" stroke="#4a5570" /></>,
  slider: <><path d="M1 2.500l3-1 5 4v4l-3 2-3.500-3z" fill="#7f9ae0" stroke="#3a52a4" strokeWidth=".8" /><path d="M2 2l6 8M5 3l4 5" stroke="#2c4292" strokeWidth=".8" /></>,
  curve: <><path d="M1 7q3 0 4-2t3-2.500M5 7l1 4 3 .5" stroke="#555" /><circle cx="7" cy="4" r="2" stroke="#b5604a" fill="#f7d9c7" /><circle cx="3.500" cy="7" r="1.200" fill="#d08a5a" /></>,
};

/* One indent column of the tree: v = line, t = tee, l = corner, m = expander. */
function Guide({ k }: { k: string }) {
  return (
    <Svg w={12.5} h={13.33}>
      <g stroke="#b5b5b5" strokeWidth=".9" strokeDasharray="1.300 .9">
        {k === "v" && <path d="M6 0v13.300" />}
        {k === "t" && <path d="M6 0v13.300M6 6.700h6" />}
        {k === "l" && <path d="M6 0v6.700h6" />}
        {k === "m" && <path d="M9 6.700h3.500" />}
      </g>
      {k === "m" && (
        <>
          <rect x="3.200" y="3.900" width="5.600" height="5.600" fill="#fff" stroke="#d0d0d0" strokeWidth=".8" />
          <path d="M4.500 6.700h3" stroke="#666" strokeWidth=".9" />
        </>
      )}
    </Svg>
  );
}

type Row = { g: string; text: string; icon?: string; bold?: boolean };
const rows: Row[] = [
  { g: "m", text: "Studies" },
  { g: " m", text: "Solution 1", bold: true },
  { g: "  m", text: "Rigid Groups" },
  { g: "  vt", text: "Rigid Group (1)", icon: "rigid" },
  { g: "  vt", text: "Rigid Group (2)", icon: "rigid" },
  { g: "  vt", text: "Rigid Group (3)", icon: "rigid" },
  { g: "  vl", text: "Spline1", icon: "rigid" },
  { g: "  m", text: "Joints" },
  { g: "  vt", text: "Fixed Joint (1)", icon: "fixed" },
  { g: "  vt", text: "Revolute Joint...", icon: "revolute" },
  { g: "  vt", text: "Spherical Joint...", icon: "spherical" },
  { g: "  vt", text: "Slider Joint (1)", icon: "slider" },
  { g: "  vl", text: "Curve On Cur...", icon: "curve" },
  { g: "  t", text: "Couplers" },
  { g: "  t", text: "Motors" },
  { g: "  l", text: "Measurements" },
];
const allRows: (Row | null)[] = [...rows, ...Array.from({ length: 24 }, () => null)];

function Navigator() {
  return (
    <div className="flex w-[205px] shrink-0 flex-col border-r-[1.500px] border-[#9fb0b5] pl-[7px] pr-[9px] text-[7.900px] tracking-[-.160px] text-[#222]">
      <div className="flex h-[21px] items-center justify-between pr-px text-[8.200px] tracking-[-.200px]">
        <span>Animation Navigator</span>
        <Svg w={9} h={8}><rect x=".8" y=".8" width="7.400" height="6" stroke="#222" /><path d="M.5 1.200h8" stroke="#222" strokeWidth="1.200" /></Svg>
      </div>
      <div className="flex h-[14px] items-center border border-b-0 border-[#dedede] bg-[#ededed] leading-[10px] tracking-[0px]">
        <div className="flex h-full w-[133px] items-center gap-[11px] border-r border-[#d6d6d6] pl-[4px]">
          <span className="pt-[2px]">Name</span>
          <Svg w={6} h={4}><path d="M0 3.500h6L3 .3z" fill="#111" /></Svg>
        </div>
        <div className="flex h-full w-[33px] items-center border-r border-[#d6d6d6] pl-[4px] pt-[2px]">Color</div>
      </div>
      <div className="flex h-[533px] flex-col border-x border-b border-[#dedede] leading-[10px]">
        {allRows.map((r, i) => (
          <div key={i} className={`flex h-[13.325px] shrink-0 border-t border-[#ececec] ${i % 2 ? "bg-[#f8f8f8]" : "bg-[#fdfdfd]"}`}>
            <div className="flex h-[12.400px] w-[133px] shrink-0 items-center border-r border-[#e6e6e6] pl-px">
              {r && (
                <>
                  {r.g.split("").map((k, j) => (
                    <Guide key={j} k={k} />
                  ))}
                  {r.icon ? (
                    <>
                      <CheckIcon />
                      <Svg w={12} h={13}>{bodyIcons[r.icon]}</Svg>
                    </>
                  ) : (
                    <FolderIcon />
                  )}
                  <span className={`whitespace-nowrap pl-[.5px] pt-px ${r.bold ? "font-bold tracking-[-.360px]" : ""}`}>{r.text}</span>
                </>
              )}
            </div>
            <div className="h-full w-[33px] shrink-0 border-r border-[#e6e6e6]" />
          </div>
        ))}
      </div>
      <div className="flex h-[15px] items-center justify-between border-b border-[#cfcfcf] pl-[5px] pr-[3px] text-[8.800px] text-[#1f5a6e]">
        <span className="pt-px">Dependencies</span>
        <Svg w={8} h={7}><path d="M.8 1l3.200 4.500L7.200 1" stroke="#1f6277" strokeWidth="1.600" /></Svg>
      </div>
      <div className="mt-[3px] h-px bg-[#dcdcdc]" />
    </div>
  );
}

/* ---------- graphics window ---------- */

function Viewport() {
  return (
    <svg viewBox="226 125 1054 579" width="1054" height="579" fill="none" className="block font-['Open_Sans',sans-serif]">
      <g stroke="#2e50b2" strokeWidth="1.150">
        <ellipse cx="409.700" cy="343.700" rx="69.500" ry="97.700" transform="rotate(-16.7 409.700 343.700)" />
        <path d="M514.500 161L511.700 316L410 343.500L438.500 297.500L585 334.500L410 343.500L408.200 438" />
        <path d="M472.500 325.500h9M477 321v9" stroke="#2b5bdc" />
        <path d="M249 431L802.500 571" />
        <path d="M270 436C286 419 304 410 325 409.700C352 409.700 370 419 390 430C425 449 455 474 490 492C530 513 560 521 608 522C670 520 725 487 778 485C845 485 885 546 935 582C1000 631 1080 652 1226 673" />
      </g>
      <g stroke="#866060" strokeWidth=".9">
        <path d="M510.700 404V360M510.500 404.500L545 413.500M510.500 404.500L540 396.500M506 404.500h9M510.500 400v9" />
        <path d="M511 377.500l18.500-5v26.500M511 377.500l20.700 5.500v26.500M529.500 399l20 5.800-18 4.700M529.500 399v-26" />
        <path d="M510.900 353l-2 8h4zM551 415l-8-4.200-1 3.800zM547.500 395l-8.500-.3 1.300 4z" fill="#6d4444" />
      </g>
      <g fill="#5a4a4a" fontSize="9">
        <text x="508" y="350">Z</text>
        <text x="547.500" y="397">Y</text>
        <text x="552" y="418.500">X</text>
      </g>
      <path d="M274.500 640.500l11-4.500 12.500 4v15l-12.500 4.500-11-3z" fill="#dedfde" stroke="#9d9d9d" strokeWidth=".8" />
      <path d="M274.500 640.500l11.500 3 12-3.500M286 643.500v15.500" stroke="#8f8f8f" strokeWidth=".8" />
      <path d="M272 657l19-5" stroke="#a8cfa8" strokeWidth="1.500" />
      <text x="292" y="654" fontSize="7" fill="#a9cbaa">Y</text>
      <path d="M272.200 657V634" stroke="#1b3cc4" strokeWidth="1.700" />
      <path d="M272.300 626.500l-2.400 8.500h4.800z" fill="#1b3cc4" />
      <path d="M272 657l15 3.800" stroke="#b52a2a" strokeWidth="2" />
      <path d="M294.500 662.500l-9-4-.8 4z" fill="#b52a2a" />
      <circle cx="271.500" cy="657" r="2.300" fill="#d9d9d9" stroke="#999" strokeWidth=".6" />
      <text x="269.800" y="626.500" fontSize="8" fill="#3a5ac0">Z</text>
      <text x="294.800" y="666" fontSize="8" fill="#b04848">X</text>
    </svg>
  );
}

function Graphics() {
  return (
    <div className="flex min-w-0 flex-1 flex-col">
      <div className="flex h-[13px] border-b-[1.500px] border-[#4689a3]">
        <div className="flex h-[13px] w-[130px] items-center bg-[#4995ab] pl-[5px] text-[7.600px] leading-[10px] tracking-[-.170px] text-white">
          <Svg w={9}><path d="M1 2.500L4 .5l4 2.500v4L5 8.500 1 7z" fill="#2b62c0" stroke="#173c86" strokeWidth=".8" /><path d="M2 3l2 1.500v3" stroke="#a6c4f4" /></Svg>
          <span className="w-[95px] whitespace-nowrap pl-[3.500px] pt-px">Demo_01_Suspension.prt</span>
          <Svg w={7} h={8}><path d="M5.500 4V7.300H1V.8h3.500l1 1.200M3 4.500h3.500" stroke="#fff" /></Svg>
          <div className="w-[4px]" />
          <Svg w={6}><path d="M.8 .8l4.400 4.400M5.200 .8L.8 5.200" stroke="#fff" strokeWidth="1.400" /></Svg>
        </div>
      </div>
      <Viewport />
    </div>
  );
}

function StatusBar() {
  return (
    <div className="flex h-[16px] shrink-0 items-center border-b-2 border-t border-b-[#6c8ea6] border-t-[#bdbdbd] pl-[2px] text-[7.500px] font-semibold tracking-[-.120px] text-[#141414]">
      <span className="whitespace-nowrap pt-px">Select objects and use MB3, or double-click an object</span>
      <div className="flex-1" />
      <Svg w={10} h={9}><rect x=".5" y=".5" width="9" height="8" fill="#d8d8d8" stroke="#b5b5b5" /><path d="M2 3l2 2 1-2 2 3 1-3M2 6h5" stroke="#999" strokeWidth=".8" /></Svg>
      <div className="w-[3px]" />
      <Svg w={11} h={10}><path d="M.5 3V.5H3M8 .5h2.500V3M10.500 7v2.500H8M3 9.500H.5V7" stroke="#999" /><rect x="2.800" y="2.500" width="5.500" height="5" fill="#86aedb" stroke="#3b4b66" /></Svg>
      <div className="w-[7px]" />
      <Svg w={11}><circle cx="5.500" cy="6" r="4.500" fill="#2a9aa8" /><path d="M2 5q3 1 4 5M6 2q3 2 4 5" stroke="#2c5c92" /><path d="M3 1h5L5.500 5z" fill="#c2413c" /></Svg>
      <div className="w-[18px]" />
    </div>
  );
}

export default function App() {
  return (
    <div className="flex h-[720px] w-[1280px] flex-col overflow-hidden bg-[#fdfdfd] font-['Open_Sans','Noto_Sans',sans-serif] [text-rendering:geometricPrecision]">
      <TitleBar />
      <TabBar />
      <Ribbon />
      <SelectionBar />
      <div className="h-[1.500px] shrink-0 bg-[#d4d4d4]" />
      <div className="flex h-[592px] shrink-0">
        <SideBar />
        <Navigator />
        <Graphics />
      </div>
      <StatusBar />
    </div>
  );
}
